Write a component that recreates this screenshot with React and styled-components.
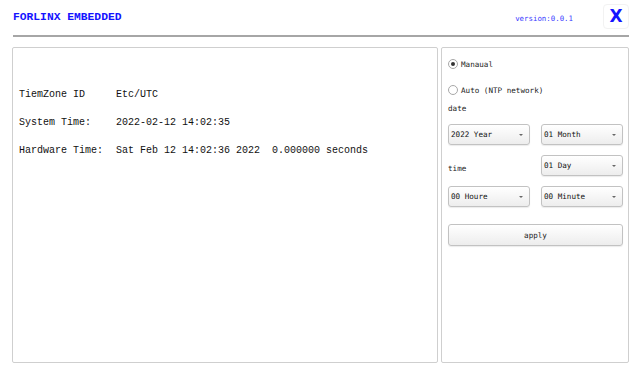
import React from "react";
import styled, { createGlobalStyle } from "styled-components";

const GlobalStyle = createGlobalStyle`
	html, body {
		margin: 0;
		padding: 0;
		background: #fff;
	}
	body {
		font-family: "Liberation Mono", "DejaVu Sans Mono", monospace;
	}
`;

const Page = styled.div`
	width: 642px;
	height: 376px;
	box-sizing: border-box;
	padding: 0 13px 0 12px;
`;

const Header = styled.div`
	height: 35px;
	display: flex;
	align-items: center;
	padding-left: 1px;
`;

const Title = styled.div`
	font-family: "Liberation Mono", monospace;
	font-weight: bold;
	font-size: 11.3px;
	color: #1414ff;
	flex: 1;
	margin-top: -1px;
`;

const Version = styled.div`
	font-family: "DejaVu Sans Mono", monospace;
	font-size: 7.4px;
	color: #3a3aff;
	margin-right: 30px;
	margin-top: 1px;
`;

const CloseButton = styled.button`
	width: 26px;
	height: 25px;
	border: 1px solid #f2f2f2;
	border-radius: 4px;
	background: #fff;
	color: #1414ff;
	font-family: "DejaVu Sans", sans-serif;
	font-weight: bold;
	font-size: 17px;
	padding: 0;
	line-height: 1;
	margin-top: -2px;
`;

const Rule = styled.div`
	margin-left: 1px;
	border-top: 2px solid #a6a6a6;
`;

const Main = styled.div`
	margin-top: 10px;
	display: grid;
	grid-template-columns: 426px 188px;
	column-gap: 3px;
	height: 316px;
`;

const Panel = styled.div`
	border: 1px solid #cfcfcf;
	border-radius: 2px;
	box-sizing: border-box;
`;

const InfoPanel = styled(Panel)`
	padding: 40px 0 0 6px;
	display: grid;
	grid-template-columns: 97px auto;
	grid-auto-rows: 14px;
	row-gap: 14px;
	align-content: start;
	font-family: "Liberation Mono", monospace;
	font-size: 10px;
	color: #111;
	line-height: 14px;
	white-space: pre;
`;

const SettingsPanel = styled(Panel)`
	padding: 9px 5px 0 6px;
	font-family: "DejaVu Sans Mono", monospace;
	font-size: 7.6px;
	color: #222;
`;

const RadioRow = styled.label`
	display: flex;
	align-items: center;
	gap: 3px;
	height: 14px;
	margin-bottom: ${(p) => p.$gap || 0}px;
`;

const RadioDot = styled.span`
	width: 8px;
	height: 8px;
	border-radius: 50%;
	border: 1px solid #a8a8a8;
	background: #fff;
	display: flex;
	align-items: center;
	justify-content: center;
	&::after {
		content: "";
		width: 4px;
		height: 4px;
		border-radius: 50%;
		background: ${(p) => (p.$checked ? "#333" : "transparent")};
	}
`;

const Label = styled.div`
	height: 14px;
	line-height: 14px;
	margin-bottom: ${(p) => p.$gap || 0}px;
	align-self: ${(p) => p.$align || "auto"};
`;

const SelectGrid = styled.div`
	display: grid;
	grid-template-columns: 82px 82px;
	column-gap: 11px;
	grid-auto-rows: 21px;
	row-gap: 10px;
`;

const Select = styled.div`
	box-sizing: border-box;
	height: 21px;
	border: 1px solid #c2c2c2;
	border-radius: 3px;
	background: linear-gradient(#ffffff, #ededed);
	box-shadow: 0 1px 1px rgba(0, 0, 0, 0.08);
	display: flex;
	align-items: center;
	padding: 0 6px 0 2px;
	color: #111;
	&::after {
		content: "";
		margin-left: auto;
		border-left: 2.5px solid transparent;
		border-right: 2.5px solid transparent;
		border-top: 2.5px solid #666;
	}
`;

const ApplyButton = styled.button`
	margin-top: 17px;
	width: 175px;
	height: 22px;
	border: 1px solid #c2c2c2;
	border-radius: 3px;
	background: linear-gradient(#ffffff, #ededed);
	box-shadow: 0 1px 1px rgba(0, 0, 0, 0.08);
	font-family: "DejaVu Sans Mono", monospace;
	font-size: 7.6px;
	color: #222;
	padding: 0;
`;

const info = [
	["TiemZone ID", "Etc/UTC"],
	["System Time:", "2022-02-12 14:02:35"],
	["Hardware Time:", "Sat Feb 12 14:02:36 2022  0.000000 seconds"],
];

export default function App() {
	return (
		<Page>
			<GlobalStyle />
			<Header>
				<Title>FORLINX EMBEDDED</Title>
				<Version>version:0.0.1</Version>
				<CloseButton>X</CloseButton>
			</Header>
			<Rule />
			<Main>
				<InfoPanel>
					{info.map(([k, v]) => (
						<React.Fragment key={k}>
							<span>{k}</span>
							<span>{v}</span>
						</React.Fragment>
					))}
				</InfoPanel>
				<SettingsPanel>
					<RadioRow $gap={12}>
						<RadioDot $checked />
						Manaual
					</RadioRow>
					<RadioRow $gap={5}>
						<RadioDot />
						Auto (NTP network)
					</RadioRow>
					<Label $gap={8}>date</Label>
					<SelectGrid>
						<Select>2022 Year</Select>
						<Select>01 Month</Select>
						<Label $align="end">time</Label>
						<Select>01 Day</Select>
						<Select>00 Houre</Select>
						<Select>00 Minute</Select>
					</SelectGrid>
					<ApplyButton>apply</ApplyButton>
				</SettingsPanel>
			</Main>
		</Page>
	);
}
